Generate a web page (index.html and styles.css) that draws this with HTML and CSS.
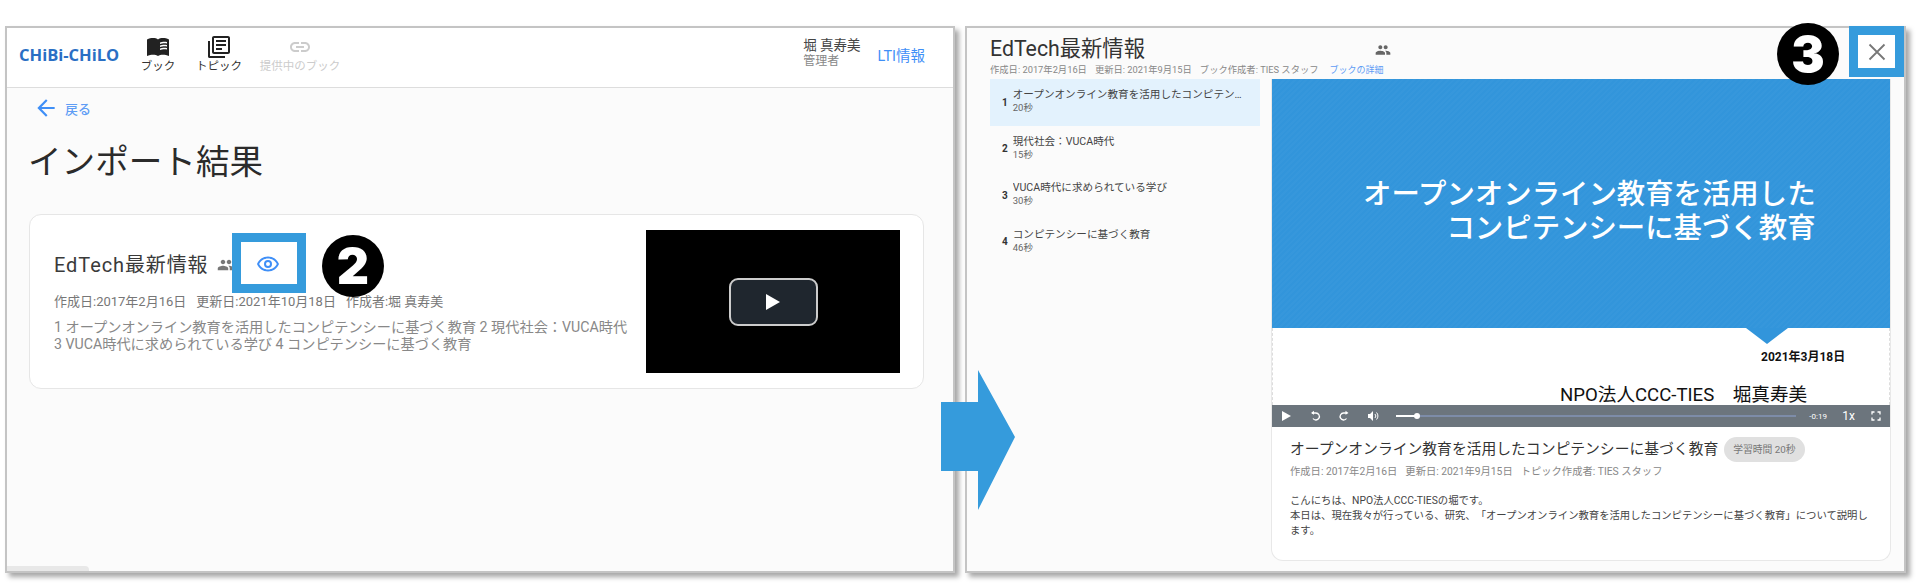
FILE: index.html
```html
<!DOCTYPE html>
<html lang="ja">
<head>
    <meta charset="UTF-8">
    <title>インポート結果</title>
    <link rel="stylesheet" href="styles.css">
</head>
<body>
    <div class="window left-window">
        <header class="topbar">
            <div class="logo">CHiBi-CHiLO</div>
            <nav class="nav">
                <div class="nav-item nav-book">
                    <svg width="24" height="24" viewBox="0 0 24 24"><path fill="#222" d="M1 4.5C3 3.4 5.2 3 7 3c1.9 0 3.9.4 5 1.5V21c-1.100-.9-3.100-1.300-5-1.300-1.800 0-4 .4-6 1.300z"/><path fill="#222" d="M12 4.5C13.100 3.400 15.100 3 17 3c1.800 0 4 .4 6 1.500V21c-2-.9-4.200-1.300-6-1.300-1.900 0-3.900.4-5 1.300z"/><path fill="#fff" d="M14 7.500c1.800-.8 5-1 7-.4v1.300c-2-.5-5.200-.3-7 .5zm0 3c1.800-.8 5-1 7-.4v1.300c-2-.5-5.200-.3-7 .5zm0 3c1.800-.8 5-1 7-.4v1.300c-2-.5-5.200-.3-7 .5z"/></svg>
                    <span>ブック</span>
                </div>
                <div class="nav-item nav-topic">
                    <svg width="24" height="24" viewBox="0 0 24 24"><path fill="#222" d="M3 6H1v15.5C1 22.300 1.700 23 2.500 23H18v-2H3z"/><path fill="#222" d="M21 1H7C5.900 1 5 1.900 5 3v14c0 1.100.9 2 2 2h14c1.100 0 2-.9 2-2V3c0-1.100-.9-2-2-2zm0 16H7V3h14z"/><path fill="#222" d="M9 5h10v2H9zm0 4h10v2H9zm0 4h6v2H9z"/></svg>
                    <span>トピック</span>
                </div>
                <div class="nav-item nav-shared">
                    <svg width="24" height="24" viewBox="0 0 24 24"><path fill="#ccc" d="M3.900 12c0-1.700 1.400-3.100 3.100-3.100h4V7H7c-2.800 0-5 2.200-5 5s2.200 5 5 5h4v-1.900H7c-1.700 0-3.100-1.400-3.100-3.100zM8 13h8v-2H8zm9-6h-4v1.900h4c1.700 0 3.100 1.400 3.100 3.100s-1.400 3.100-3.100 3.100h-4V17h4c2.800 0 5-2.200 5-5s-2.200-5-5-5z"/></svg>
                    <span>提供中のブック</span>
                </div>
            </nav>
            <div class="user">
                <div class="user-name">堀 真寿美</div>
                <div class="user-role">管理者</div>
            </div>
            <div class="lti">LTI情報</div>
        </header>
        <main class="import">
            <div class="back">
                <svg width="26" height="26" viewBox="0 0 24 24"><path fill="#3f8ff7" d="M20 11H7.800l5.600-5.600L12 4l-8 8 8 8 1.400-1.400L7.800 13H20z"/></svg>
                <span>戻る</span>
            </div>
            <h1>インポート結果</h1>
            <section class="card">
                <div class="card-text">
                    <div class="card-title">
                        <span>EdTech最新情報</span>
                        <svg class="people" width="18" height="18" viewBox="0 0 24 24"><path fill="#777" d="M16 11c1.700 0 3-1.300 3-3s-1.300-3-3-3-3 1.300-3 3 1.300 3 3 3zm-8 0c1.700 0 3-1.300 3-3S9.700 5 8 5 5 6.300 5 8s1.300 3 3 3zm0 2c-2.300 0-7 1.200-7 3.500V19h14v-2.500C15 14.200 10.300 13 8 13zm8 0h-1c1.200.8 2 2 2 3.500V19h6v-2.500c0-2.300-4.700-3.500-7-3.500z"/></svg>
                    </div>
                    <div class="card-meta">
                        <span>作成日:2017年2月16日</span>
                        <span>更新日:2021年10月18日</span>
                        <span>作成者:堀 真寿美</span>
                    </div>
                    <p class="card-desc">1 オープンオンライン教育を活用したコンピテンシーに基づく教育 2 現代社会：VUCA時代<br>3 VUCA時代に求められている学び 4 コンピテンシーに基づく教育</p>
                </div>
                <div class="thumb">
                    <div class="big-play"><svg width="16" height="18" viewBox="0 0 16 18"><path fill="#fff" d="M1 1l14 8-14 8z"/></svg></div>
                </div>
            </section>
        </main>
        <div class="corner-tab"></div>
    </div>

    <div class="window right-window">
        <header class="book-head">
            <div class="book-title-row">
                <div class="book-title">EdTech最新情報</div>
                <svg width="16" height="16" viewBox="0 0 24 24"><path fill="#666" d="M16 11c1.700 0 3-1.300 3-3s-1.300-3-3-3-3 1.300-3 3 1.300 3 3 3zm-8 0c1.700 0 3-1.300 3-3S9.700 5 8 5 5 6.300 5 8s1.300 3 3 3zm0 2c-2.300 0-7 1.200-7 3.500V19h14v-2.500C15 14.200 10.300 13 8 13zm8 0h-1c1.200.8 2 2 2 3.500V19h6v-2.500c0-2.300-4.700-3.500-7-3.500z"/></svg>
            </div>
            <div class="book-meta">
                <span>作成日: 2017年2月16日</span>
                <span>更新日: 2021年9月15日</span>
                <span>ブック作成者: TIES スタッフ</span>
                <a class="book-link">ブックの詳細</a>
            </div>
        </header>
        <div class="book-body">
            <ul class="topics">
                <li class="topic active"><b>1</b><div class="topic-text"><div class="topic-name">オープンオンライン教育を活用したコンピテンシーに基づく教育</div><div class="topic-time">20秒</div></div></li>
                <li class="topic"><b>2</b><div class="topic-text"><div class="topic-name">現代社会：VUCA時代</div><div class="topic-time">15秒</div></div></li>
                <li class="topic"><b>3</b><div class="topic-text"><div class="topic-name">VUCA時代に求められている学び</div><div class="topic-time">30秒</div></div></li>
                <li class="topic"><b>4</b><div class="topic-text"><div class="topic-name">コンピテンシーに基づく教育</div><div class="topic-time">46秒</div></div></li>
            </ul>
            <div class="player-card">
                <div class="slide">
                    <div class="slide-blue">
                        <div class="slide-heading">オープンオンライン教育を活用した<br>コンピテンシーに基づく教育</div>
                    </div>
                    <div class="slide-white">
                        <div class="slide-date">2021年3月18日</div>
                        <div class="slide-author">NPO法人CCC-TIES　堀真寿美</div>
                    </div>
                </div>
                <div class="controls">
                    <svg class="ctl" width="12" height="12" viewBox="0 0 12 12"><path fill="#fff" d="M2 1l9 5-9 5z"/></svg>
                    <svg class="ctl" width="12" height="12" viewBox="0 0 12 12"><path fill="none" stroke="#fff" stroke-width="1.300" d="M3 3h4a3.500 3.500 0 1 1-3 5.500"/><path fill="#fff" d="M5 .8v4L2 3z"/></svg>
                    <svg class="ctl" width="12" height="12" viewBox="0 0 12 12"><path fill="none" stroke="#fff" stroke-width="1.300" d="M9 3H5.500a3.500 3.500 0 1 0 3 5.500"/><path fill="#fff" d="M7.500 .8v4l3-1.800z"/></svg>
                    <svg class="ctl" width="12" height="12" viewBox="0 0 12 12"><path fill="#fff" d="M1 4h2l3-3v10L3 8H1z"/><path fill="none" stroke="#fff" d="M8 4a3 3 0 0 1 0 4m1.500-5.500a5 5 0 0 1 0 7"/></svg>
                    <div class="seek"><div class="seek-done"></div><div class="seek-knob"></div></div>
                    <span class="time">-0:19</span>
                    <span class="speed">1x</span>
                    <svg width="12" height="12" viewBox="0 0 12 12"><path fill="none" stroke="#fff" stroke-width="1.300" d="M2 4.500V2h2.500M7.500 2H10v2.500M10 7.500V10H7.500M4.500 10H2V7.500"/></svg>
                </div>
                <div class="topic-detail">
                    <div class="detail-title">
                        <span>オープンオンライン教育を活用したコンピテンシーに基づく教育</span>
                        <span class="badge">学習時間 20秒</span>
                    </div>
                    <div class="detail-meta">
                        <span>作成日: 2017年2月16日</span>
                        <span>更新日: 2021年9月15日</span>
                        <span>トピック作成者: TIES スタッフ</span>
                    </div>
                    <p class="detail-text">こんにちは、NPO法人CCC-TIESの堀です。<br>本日は、現在我々が行っている、研究、「オープンオンライン教育を活用したコンピテンシーに基づく教育」について説明します。</p>
                </div>
            </div>
        </div>
    </div>

    <div class="mark mark-eye"><svg width="24" height="24" viewBox="0 0 24 24"><path fill="#3f8ff7" d="M12 4.500C7 4.500 2.700 7.600 1 12c1.700 4.400 6 7.500 11 7.500s9.300-3.100 11-7.500c-1.700-4.400-6-7.500-11-7.500zm0 13c-3.800 0-7.200-2.200-8.800-5.500C4.800 8.700 8.200 6.500 12 6.500s7.200 2.200 8.800 5.500c-1.600 3.300-5 5.500-8.800 5.500z"/><path fill="#3f8ff7" d="M12 8a4 4 0 1 0 0 8 4 4 0 0 0 0-8zm0 6a2 2 0 1 1 0-4 2 2 0 0 1 0 4z"/></svg></div>
    <div class="mark mark-close"><svg width="20" height="20" viewBox="0 0 20 20"><path stroke="#777" stroke-width="1.800" d="M2.500 2.500l15 15m0-15l-15 15"/></svg></div>
    <div class="step step-2">2</div>
    <div class="step step-3">3</div>
    <svg class="arrow" width="74" height="140" viewBox="0 0 74 140"><path fill="#359bdc" d="M0 32h37V0l37 67-37 73V101H0z"/></svg>
</body>
</html>
```

FILE: styles.css
```css
* {
    box-sizing: border-box;
}
body {
    margin: 0;
    width: 1920px;
    height: 588px;
    padding: 26px 0 0 5px;
    display: flex;
    gap: 10px;
    align-items: flex-start;
    background: #fff;
    overflow: hidden;
    position: relative;
    font-family: Roboto, "Noto Sans CJK JP", sans-serif;
    color: #333;
}
.window {
    height: 547px;
    background: #fbfbfb;
    border: 2px solid #c4c4c4;
    box-shadow: 4px 4px 5px rgba(0, 0, 0, 0.35);
    position: relative;
    flex: none;
}
.left-window {
    width: 950px;
}
.right-window {
    width: 941px;
}

/* left window */
.topbar {
    height: 60px;
    background: #fff;
    border-bottom: 1px solid #ddd;
    display: flex;
    align-items: center;
    padding: 0 28px 0 12px;
}
.logo {
    font-family: "Open Sans", sans-serif;
    font-weight: 700;
    font-size: 16.5px;
    color: #2a6fc4;
    width: 114px;
    flex: none;
    padding-bottom: 7px;
}
.nav {
    display: flex;
    flex: 1;
    height: 100%;
}
.nav-item {
    display: flex;
    flex-direction: column;
    align-items: center;
    padding-top: 7px;
    font-size: 11.5px;
    line-height: 15px;
    color: #333;
}
.nav-book {
    width: 48px;
    margin-left: 1px;
}
.nav-topic {
    width: 48px;
    margin-left: 13px;
}
.nav-shared {
    width: 84px;
    margin-left: 15px;
    color: #ccc;
}
.user {
    margin-right: 17px;
    padding-bottom: 9px;
}
.user-name {
    font-size: 13.5px;
    line-height: 16px;
    color: #444;
}
.user-role {
    font-size: 12px;
    line-height: 16px;
    color: #888;
}
.lti {
    font-size: 14.5px;
    color: #3f8ff7;
    padding-bottom: 7px;
}
.import {
    padding: 8px 29px 0 22px;
}
.back {
    display: flex;
    align-items: center;
    gap: 6px;
    margin-left: 4px;
    height: 24px;
    font-size: 13px;
    font-weight: 500;
    color: #5f9df5;
}
h1 {
    margin: 20px 0 28px -1px;
    font-size: 33.6px;
    line-height: 46px;
    font-weight: 400;
    color: #2b2b2b;
}
.card {
    height: 175px;
    background: #fff;
    border: 1px solid #e6e6e6;
    border-radius: 12px;
    display: flex;
    justify-content: space-between;
    padding: 15px 23px 0 24px;
}
.card-text {
    padding-top: 21px;
}
.card-title {
    display: flex;
    align-items: center;
    gap: 8px;
    font-size: 20px;
    line-height: 28px;
    letter-spacing: 0.9px;
    color: #3a3a3a;
}
.card-meta {
    display: flex;
    gap: 10px;
    margin-top: 15px;
    font-size: 13px;
    line-height: 16px;
    color: #777;
}
.card-desc {
    margin: 9px 0 0;
    font-size: 14.2px;
    line-height: 17px;
    color: #888;
    white-space: nowrap;
}
.thumb {
    width: 254px;
    height: 143px;
    background: #000;
    display: flex;
    align-items: center;
    justify-content: center;
    flex: none;
}
.big-play {
    width: 89px;
    height: 48px;
    background: #1f262e;
    border: 2px solid #ccc;
    border-radius: 9px;
    display: flex;
    align-items: center;
    justify-content: center;
}
.corner-tab {
    position: absolute;
    left: 0;
    bottom: 0;
    width: 82px;
    height: 5px;
    background: #e8e8e8;
    border-radius: 0 4px 0 0;
}

/* right window */
.book-head {
    padding: 6px 0 0 23px;
}
.book-title-row {
    display: flex;
    align-items: center;
    width: 401px;
    justify-content: space-between;
}
.book-title-row svg {
    margin-top: 2px;
}
.book-title {
    font-size: 21.3px;
    line-height: 29px;
    color: #333;
}
.book-meta {
    display: flex;
    gap: 8px;
    font-size: 9.3px;
    line-height: 14px;
    color: #888;
}
.book-link {
    font-size: 9px;
    color: #5f9df5;
    margin-left: 3px;
}
.book-body {
    display: flex;
    margin-top: 2px;
    padding-left: 23px;
    gap: 11px;
}
.topics {
    list-style: none;
    margin: 0;
    padding: 0;
    width: 270px;
    flex: none;
}
.topic {
    height: 46.5px;
    display: flex;
    align-items: center;
    padding-left: 12px;
    gap: 5px;
}
.topic b {
    font-size: 10px;
    font-weight: 700;
}
.topic.active {
    background: #e3f2fd;
}
.topic-text {
    min-width: 0;
    flex: 1;
    padding: 0 12px 3px 0;
}
.topic-name {
    font-size: 10.6px;
    line-height: 15px;
    color: #444;
    white-space: nowrap;
    overflow: hidden;
    text-overflow: ellipsis;
}
.topic-time {
    font-size: 9.5px;
    line-height: 12px;
    color: #666;
}
.player-card {
    width: 620px;
    height: 482px;
    background: #fff;
    border: 1px solid #e8e8e8;
    border-top: 0;
    border-radius: 0 0 12px 12px;
    flex: none;
}
.slide {
    height: 326px;
    overflow: hidden;
}
.slide-blue {
    height: 249px;
    background-color: #3295db;
    background-image: repeating-linear-gradient(135deg, rgba(255, 255, 255, 0.02) 0 2px, transparent 2px 4px);
    position: relative;
    padding: 99px 0 0 91px;
}
.slide-blue::after {
    content: "";
    position: absolute;
    left: 474px;
    bottom: -16px;
    border-left: 21px solid transparent;
    border-right: 21px solid transparent;
    border-top: 16px solid #3295db;
}
.slide-heading {
    display: inline-block;
    text-align: right;
    font-size: 28.4px;
    line-height: 34px;
    font-weight: 500;
    color: #fff;
    white-space: nowrap;
}
.slide-white {
    height: 77px;
    padding-top: 20px;
    color: #111;
    border-left: 1px dashed #ddd;
    border-right: 1px dashed #ddd;
}
.slide-date {
    margin-left: 488px;
    font-size: 12px;
    font-weight: 700;
    line-height: 18px;
}
.slide-author {
    margin: 17px 0 0 287px;
    font-size: 18.6px;
    line-height: 24px;
    white-space: nowrap;
}
.controls {
    height: 22px;
    background: #6c757d;
    display: flex;
    align-items: center;
    padding: 0 8px;
    color: #fff;
}
.ctl {
    margin-right: 17px;
}
.seek {
    flex: 1;
    height: 2px;
    background: #7d8ca8;
    position: relative;
}
.seek-done {
    width: 21px;
    height: 2px;
    background: #fff;
}
.seek-knob {
    position: absolute;
    left: 18px;
    top: -2px;
    width: 6px;
    height: 6px;
    border-radius: 50%;
    background: #fff;
}
.time {
    font-size: 8px;
    margin-left: 13px;
    width: 22px;
}
.speed {
    font-size: 12px;
    margin: 0 15px 0 11px;
}
.topic-detail {
    padding: 10px 17px 0 18px;
}
.detail-title {
    display: flex;
    align-items: center;
    gap: 6px;
    font-size: 14.8px;
    line-height: 25px;
    white-space: nowrap;
    color: #333;
}
.badge {
    font-size: 9.8px;
    line-height: 25px;
    padding: 0 9px;
    border-radius: 13px;
    background: #e0e0e0;
    color: #777;
}
.detail-meta {
    display: flex;
    gap: 8px;
    margin-top: 3px;
    font-size: 10.3px;
    line-height: 14px;
    color: #888;
}
.detail-text {
    margin: 14px 0 0;
    font-size: 10.35px;
    line-height: 15px;
    color: #444;
    text-spacing-trim: space-all;
}

/* annotations on top of the screenshots */
.mark {
    position: absolute;
    background: #fff;
    border: 9px solid #359bdc;
    display: flex;
    align-items: center;
    justify-content: center;
}
.mark-eye {
    left: 232px;
    top: 233px;
    width: 74px;
    height: 60px;
}
.mark-eye svg {
    margin: 1px 3px 0 0;
}
.mark-close {
    left: 1849px;
    top: 26px;
    width: 55px;
    height: 51px;
}
.step {
    position: absolute;
    width: 62px;
    height: 62px;
    border-radius: 50%;
    background: #000;
    color: #fff;
    font-family: Inter, "Liberation Sans", sans-serif;
    font-weight: 900;
    font-size: 50px;
    line-height: 62px;
    text-align: center;
}
.step-2 {
    left: 322px;
    top: 235px;
}
.step-3 {
    left: 1777px;
    top: 23px;
}
.arrow {
    position: absolute;
    left: 941px;
    top: 370px;
}
```
